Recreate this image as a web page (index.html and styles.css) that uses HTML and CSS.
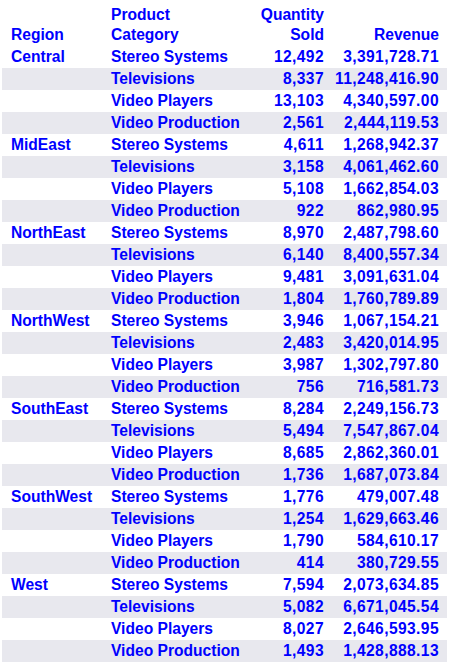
FILE: index.html
```html
<!DOCTYPE html>
<html>
<head>
<meta charset="utf-8">
<link rel="stylesheet" href="styles.css">
</head>
<body>
<table class="report">
  <colgroup>
    <col class="c-region"><col class="c-cat"><col class="c-qty"><col class="c-rev">
  </colgroup>
  <thead>
    <tr>
      <th class="left">Region</th>
      <th class="left">Product<br>Category</th>
      <th class="right">Quantity<br>Sold</th>
      <th class="right">Revenue</th>
    </tr>
  </thead>
  <tbody>
    <tr><td>Central</td><td>Stereo Systems</td><td class="num">12,492</td><td class="num">3,391,728.71</td></tr>
    <tr class="alt"><td></td><td>Televisions</td><td class="num">8,337</td><td class="num">11,248,416.90</td></tr>
    <tr><td></td><td>Video Players</td><td class="num">13,103</td><td class="num">4,340,597.00</td></tr>
    <tr class="alt"><td></td><td>Video Production</td><td class="num">2,561</td><td class="num">2,444,119.53</td></tr>
    <tr><td>MidEast</td><td>Stereo Systems</td><td class="num">4,611</td><td class="num">1,268,942.37</td></tr>
    <tr class="alt"><td></td><td>Televisions</td><td class="num">3,158</td><td class="num">4,061,462.60</td></tr>
    <tr><td></td><td>Video Players</td><td class="num">5,108</td><td class="num">1,662,854.03</td></tr>
    <tr class="alt"><td></td><td>Video Production</td><td class="num">922</td><td class="num">862,980.95</td></tr>
    <tr><td>NorthEast</td><td>Stereo Systems</td><td class="num">8,970</td><td class="num">2,487,798.60</td></tr>
    <tr class="alt"><td></td><td>Televisions</td><td class="num">6,140</td><td class="num">8,400,557.34</td></tr>
    <tr><td></td><td>Video Players</td><td class="num">9,481</td><td class="num">3,091,631.04</td></tr>
    <tr class="alt"><td></td><td>Video Production</td><td class="num">1,804</td><td class="num">1,760,789.89</td></tr>
    <tr><td>NorthWest</td><td>Stereo Systems</td><td class="num">3,946</td><td class="num">1,067,154.21</td></tr>
    <tr class="alt"><td></td><td>Televisions</td><td class="num">2,483</td><td class="num">3,420,014.95</td></tr>
    <tr><td></td><td>Video Players</td><td class="num">3,987</td><td class="num">1,302,797.80</td></tr>
    <tr class="alt"><td></td><td>Video Production</td><td class="num">756</td><td class="num">716,581.73</td></tr>
    <tr><td>SouthEast</td><td>Stereo Systems</td><td class="num">8,284</td><td class="num">2,249,156.73</td></tr>
    <tr class="alt"><td></td><td>Televisions</td><td class="num">5,494</td><td class="num">7,547,867.04</td></tr>
    <tr><td></td><td>Video Players</td><td class="num">8,685</td><td class="num">2,862,360.01</td></tr>
    <tr class="alt"><td></td><td>Video Production</td><td class="num">1,736</td><td class="num">1,687,073.84</td></tr>
    <tr><td>SouthWest</td><td>Stereo Systems</td><td class="num">1,776</td><td class="num">479,007.48</td></tr>
    <tr class="alt"><td></td><td>Televisions</td><td class="num">1,254</td><td class="num">1,629,663.46</td></tr>
    <tr><td></td><td>Video Players</td><td class="num">1,790</td><td class="num">584,610.17</td></tr>
    <tr class="alt"><td></td><td>Video Production</td><td class="num">414</td><td class="num">380,729.55</td></tr>
    <tr><td>West</td><td>Stereo Systems</td><td class="num">7,594</td><td class="num">2,073,634.85</td></tr>
    <tr class="alt"><td></td><td>Televisions</td><td class="num">5,082</td><td class="num">6,671,045.54</td></tr>
    <tr><td></td><td>Video Players</td><td class="num">8,027</td><td class="num">2,646,593.95</td></tr>
    <tr class="alt"><td></td><td>Video Production</td><td class="num">1,493</td><td class="num">1,428,888.13</td></tr>
  </tbody>
</table>
</body>
</html>
```
FILE: styles.css
```css
html, body {
  margin: 0;
  padding: 0;
  background: #ffffff;
}
body {
  padding-left: 2px;
  font-family: "Liberation Sans", Arial, sans-serif;
  font-size: 15.6px;
  font-weight: bold;
  color: #0000ff;
}
.report {
  border-collapse: collapse;
  border-spacing: 0;
  width: 445px;
  table-layout: fixed;
}
.c-region { width: 100px; }
.c-cat { width: 150px; }
.c-qty { width: 80px; }
.c-rev { width: 115px; }
.report th {
  height: 45px;
  padding: 0 0 1px 0;
  line-height: 20px;
  vertical-align: bottom;
  font-weight: bold;
}
.report th.left { text-align: left; }
.report th.right { text-align: right; }
.report th:first-child, .report td:first-child { padding-left: 9px; }
.report th:nth-child(2), .report td:nth-child(2) { padding-left: 9px; }
.report th:nth-child(3), .report td:nth-child(3) { padding-right: 8px; }
.report th:last-child, .report td:last-child { padding-right: 8px; }
.report td {
  height: 22px;
  padding-top: 0;
  padding-bottom: 0;
  line-height: 22px;
  white-space: nowrap;
  vertical-align: middle;
}
.report td.num {
  text-align: right;
  letter-spacing: 0.4px;
}
.report tr.alt td { background: #e8e8ee; }
```
